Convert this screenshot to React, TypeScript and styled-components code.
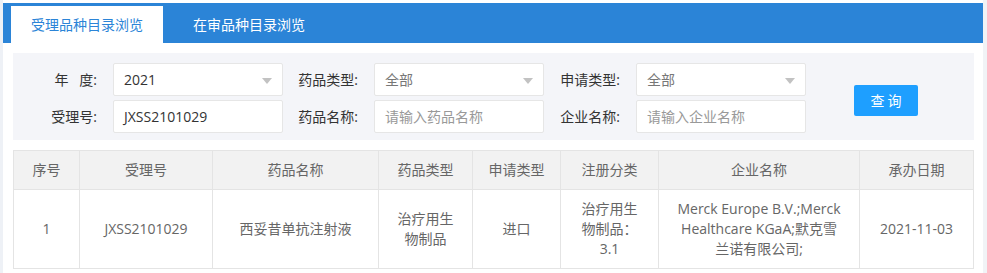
import styled, { createGlobalStyle } from "styled-components";

const GlobalStyle = createGlobalStyle`
  html, body {
    margin: 0;
    padding: 0;
    background: #fff;
  }
  body {
    font-family: "Microsoft YaHei", "Open Sans", "Noto Sans CJK SC", sans-serif;
    font-size: 14px;
    color: #333;
  }
`;

const Page = styled.div`
  box-sizing: border-box;
  width: 987px;
  height: 273px;
  display: flex;
  overflow: hidden;
  background: #fff;
  border-left: 3px solid #eef1f6;
  border-right: 4px solid #f1f3f6;
`;

const Main = styled.div`
  flex: 1;
  padding-top: 3px;
  display: flex;
  flex-direction: column;
`;

const TabBar = styled.div`
  flex-shrink: 0;
  height: 40px;
  background: #2b84d7;
  display: flex;
  align-items: flex-end;
  gap: 10px;
  padding-left: 8px;
`;

const Tab = styled.div<{ active?: boolean }>`
  height: 37px;
  line-height: 37px;
  padding: 0 20px;
  font-size: 14px;
  color: ${({ active }) => (active ? "#2b84d7" : "#fff")};
  background: ${({ active }) => (active ? "#fff" : "transparent")};
`;

const Content = styled.div`
  flex-shrink: 0;
  padding: 10px;
  display: flex;
  flex-direction: column;
  gap: 10px;
`;

const FilterPanel = styled.div`
  flex-shrink: 0;
  background: #f4f5f9;
  padding: 10px 0 7px;
  display: flex;
  align-items: center;
`;

const Rows = styled.div`
  display: flex;
  flex-direction: column;
  gap: 4px;
`;

const Row = styled.div`
  display: flex;
`;

const Label = styled.label<{ w: number }>`
  box-sizing: border-box;
  width: ${({ w }) => w}px;
  padding-right: 16px;
  text-align: right;
  line-height: 33px;
  color: #333;
  white-space: pre;
`;

const Field = styled.div<{ muted?: boolean }>`
  box-sizing: border-box;
  position: relative;
  width: 170px;
  height: 33px;
  line-height: 31px;
  padding-left: 10px;
  background: #fff;
  border: 1px solid #e6e6e6;
  border-radius: 2px;
  color: ${({ muted }) => (muted ? "#777" : "#333")};
`;

const Placeholder = styled.span`
  color: #999;
`;

const Caret = styled.i`
  position: absolute;
  right: 10px;
  top: 14px;
  width: 0;
  height: 0;
  border-left: 5px solid transparent;
  border-right: 5px solid transparent;
  border-top: 6px solid #c2c2c2;
`;

const QueryButton = styled.button`
  margin-left: 48px;
  margin-top: 4px;
  width: 64px;
  height: 31px;
  border: none;
  border-radius: 2px;
  background: #1e9fff;
  color: #fff;
  font-family: inherit;
  font-size: 14px;
  letter-spacing: 3px;
  padding: 0 0 0 3px;
  cursor: pointer;
`;

const Table = styled.table`
  flex-shrink: 0;
  width: 960px;
  table-layout: fixed;
  border-collapse: collapse;
  color: #666;
`;

const Th = styled.th`
  background: #f2f2f2;
  border: 1px solid #e4e4e4;
  padding: 9px 15px;
  line-height: 20px;
  font-weight: normal;
  text-align: center;
`;

const Td = styled.td<{ px: number }>`
  border: 1px solid #e4e4e4;
  padding: 9px ${({ px }) => px}px;
  line-height: 20px;
  text-align: center;
  word-break: normal;
  overflow-wrap: anywhere;
`;

const columns = [
  { title: "序号", width: 66, px: 15 },
  { title: "受理号", width: 133, px: 15 },
  { title: "药品名称", width: 166, px: 15 },
  { title: "药品类型", width: 94, px: 15 },
  { title: "申请类型", width: 88, px: 15 },
  { title: "注册分类", width: 98, px: 15 },
  { title: "企业名称", width: 201, px: 17 },
  { title: "承办日期", width: 114, px: 15 },
];

const rows = [
  [
    "1",
    "JXSS2101029",
    "西妥昔单抗注射液",
    "治疗用生物制品",
    "进口",
    "治疗用生物制品：3.1",
    "Merck Europe B.V.;Merck Healthcare KGaA;默克雪兰诺有限公司;",
    "2021-11-03",
  ],
];

export default function App() {
  return (
    <>
      <GlobalStyle />
      <Page>
        <Main>
          <TabBar>
            <Tab active>受理品种目录浏览</Tab>
            <Tab>在审品种目录浏览</Tab>
          </TabBar>
          <Content>
            <FilterPanel>
              <Rows>
                <Row>
                  <Label w={100}>{"年   度:"}</Label>
                  <Field>
                    2021
                    <Caret />
                  </Field>
                  <Label w={91}>药品类型:</Label>
                  <Field muted>
                    全部
                    <Caret />
                  </Field>
                  <Label w={92}>申请类型:</Label>
                  <Field muted>
                    全部
                    <Caret />
                  </Field>
                </Row>
                <Row>
                  <Label w={100}>受理号:</Label>
                  <Field>JXSS2101029</Field>
                  <Label w={91}>药品名称:</Label>
                  <Field>
                    <Placeholder>请输入药品名称</Placeholder>
                  </Field>
                  <Label w={92}>企业名称:</Label>
                  <Field>
                    <Placeholder>请输入企业名称</Placeholder>
                  </Field>
                </Row>
              </Rows>
              <QueryButton>查询</QueryButton>
            </FilterPanel>
            <Table>
              <colgroup>
                {columns.map((c) => (
                  <col key={c.title} style={{ width: c.width }} />
                ))}
              </colgroup>
              <thead>
                <tr>
                  {columns.map((c) => (
                    <Th key={c.title}>{c.title}</Th>
                  ))}
                </tr>
              </thead>
              <tbody>
                {rows.map((r, i) => (
                  <tr key={i}>
                    {r.map((cell, j) => (
                      <Td key={j} px={columns[j].px}>
                        {cell}
                      </Td>
                    ))}
                  </tr>
                ))}
              </tbody>
            </Table>
          </Content>
        </Main>
      </Page>
    </>
  );
}
